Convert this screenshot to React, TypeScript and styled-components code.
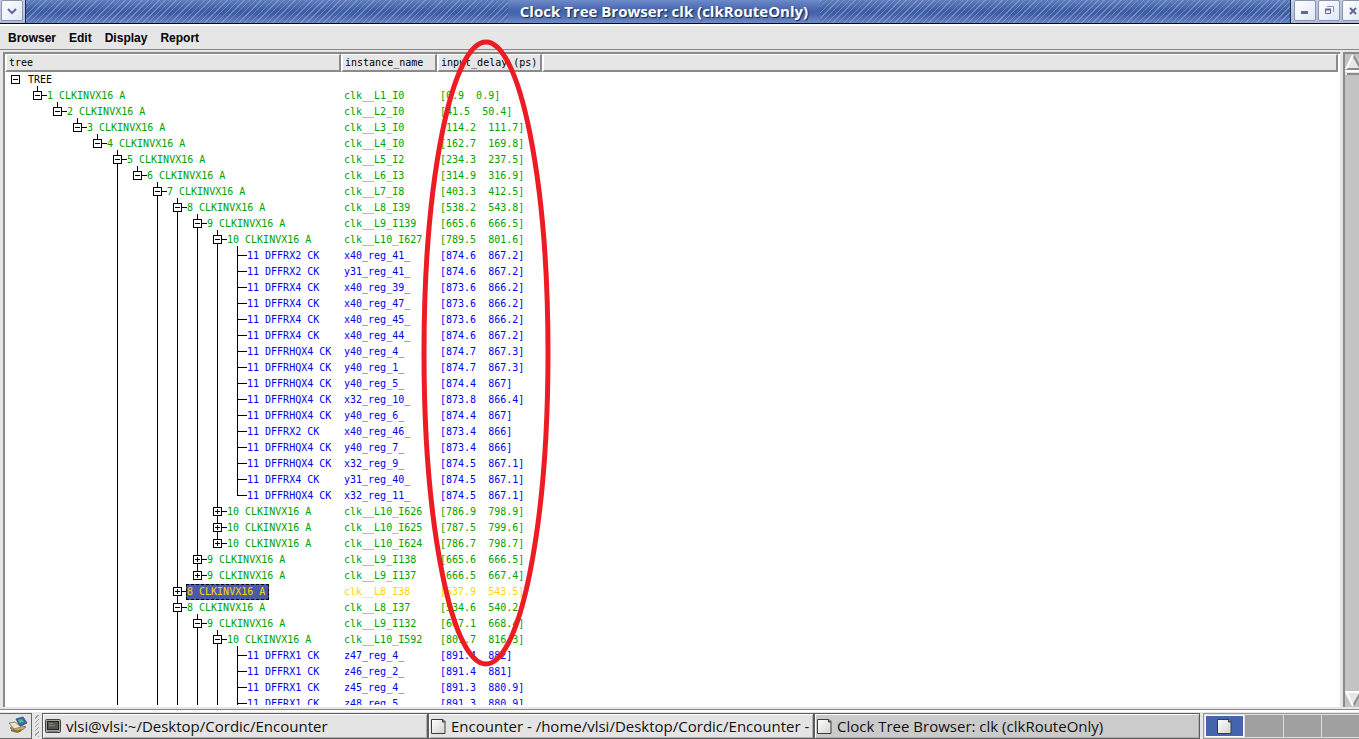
import React from "react";
import styled, { createGlobalStyle } from "styled-components";

const Global = createGlobalStyle`
  *, *::before, *::after { box-sizing: border-box; }
  body { margin: 0; background: #e6e6e6; }
`;

const Screen = styled.div`
  display: flex;
  flex-direction: column;
  height: 100vh;
  overflow: hidden;
  background: #e6e6e6;
  color: #000;
`;

const TitleBar = styled.header`
  display: flex;
  flex: none;
  height: 24px;
  border-bottom: 1px solid #0a0a14;
`;

const TitleStrip = styled.div`
  flex: 1;
  display: flex;
  align-items: center;
  justify-content: center;
  padding-left: 12px;
  border: solid #1c2c5c;
  border-width: 0 1px;
  background:
    linear-gradient(rgba(140, 165, 220, 0.45), rgba(60, 90, 165, 0) 45%, rgba(60, 90, 165, 0) 60%, rgba(140, 165, 220, 0.5)),
    repeating-linear-gradient(135deg, #3c5ca4 0 2px, #6f8bbc 2px 3px, #3c5ca4 3px 4px);
`;

const TitleText = styled.h1`
  margin: 0;
  padding: 0 12px;
  font: bold 15px/23px "Open Sans", sans-serif;
  color: #fff;
  white-space: nowrap;
  text-shadow: 1px 1px 1px #16264f;
  background: linear-gradient(#6d8bc8, #4564ac 45%, #4564ac 60%, #6f8cc9);
`;

const Controls = styled.div<{ $width: number; $inset: number }>`
  flex: none;
  display: flex;
  gap: 2px;
  padding: 0 ${(p) => p.$inset}px;
  background: linear-gradient(#c4cee2, #aebbd6);
  width: ${(p) => p.$width}px;
  overflow: hidden;
`;

const ControlButton = styled.button`
  flex: none;
  width: 22px;
  height: 21px;
  padding: 0;
  display: grid;
  place-items: center;
  border: 1px solid #8a94ac;
  border-radius: 2px;
  background: linear-gradient(135deg, #fff, #dfe6f6);
  svg { display: block; }
`;

const MenuBar = styled.nav`
  flex: none;
  display: flex;
  gap: 13px;
  height: 26px;
  padding: 0 8px;
  border-top: 2px solid #fff;
  border-bottom: 1px solid #8a8a8a;
`;

const MenuItem = styled.button`
  padding: 0;
  border: 0;
  background: none;
  color: #000;
  font: bold 12px/22px "Liberation Sans", Arial, sans-serif;
`;

const Workspace = styled.main`
  flex: 1;
  min-height: 0;
  display: flex;
  gap: 3px;
  padding: 2px 0 2px 3px;
`;

const TreePanel = styled.section`
  flex: 1;
  min-width: 0;
  overflow: hidden;
  padding: 0 2px 0 0;
  border: solid #8a8a8a;
  border-width: 2px 0 0 2px;
  background: #fff;
`;

const TreeViewport = styled.div`
  height: 100%;
  overflow: hidden;
  border-bottom: 2px solid #fff;
`;

const TreeTable = styled.table`
  width: 100%;
  table-layout: fixed;
  border-collapse: separate;
  border-spacing: 0;
  font: 10px/16px "DejaVu Sans Mono", monospace;
  white-space: pre;
`;

const HeadCell = styled.th`
  height: 18px;
  padding: 0 2px;
  border: solid;
  border-width: 1px 2px 2px 2px;
  border-color: #fff #8a8a8a #8a8a8a #fff;
  background: #e6e6e6;
  font-weight: normal;
  line-height: 15px;
  text-align: left;
`;

type Tone = "root" | "clock" | "leaf" | "picked";
const toneColor: Record<Tone, string> = {
  root: "#000",
  clock: "#00a000",
  leaf: "#0000f0",
  picked: "#ffd700",
};

const Row = styled.tr<{ $tone: Tone }>`
  height: 16px;
  color: ${(p) => toneColor[p.$tone]};
`;

const Cell = styled.td`
  height: 16px;
  padding: 0 0 0 3px;
  line-height: 16px;
`;

const TreeCell = styled(Cell)`
  padding: 0 0 0 2px;
`;

const Branch = styled.div`
  display: flex;
  height: 16px;
`;

const Guide = styled.span<{ $line: number; $joined?: boolean }>`
  flex: none;
  width: 20px;
  height: 18px;
  margin-top: -2px;
  padding: 5px 0 0 6px;
  background-image: linear-gradient(#000, #000), linear-gradient(#000, #000);
  background-repeat: no-repeat;
  background-position: 10px 0, 10px 9px;
  background-size: 1px ${(p) => p.$line}px, ${(p) => (p.$joined ? "10px 1px" : "0 0")};
`;

const RootGuide = styled.span`
  flex: none;
  width: 21px;
  padding: 3px 0 0 4px;
`;

const Toggle = styled.button<{ $open: boolean }>`
  display: block;
  width: 9px;
  height: 9px;
  padding: 0;
  border: 1px solid #000;
  background:
    linear-gradient(#000, #000) center / 5px 1px no-repeat,
    linear-gradient(#000, #000) center / ${(p) => (p.$open ? "0 0" : "1px 5px")} no-repeat,
    #fff;
`;

const Label = styled.span<{ $picked?: boolean }>`
  ${(p) =>
    p.$picked &&
    `background: #4a5aa8; outline: 1px dashed #000; outline-offset: -1px; margin-left: -1px; padding: 0 4px 0 1px;`}
`;

const Annotation = styled.svg`
  position: absolute;
  left: 419px;
  top: 38px;
  pointer-events: none;
`;

const ScrollBar = styled.div`
  flex: none;
  width: 16px;
  display: flex;
  flex-direction: column;
  justify-content: space-between;
  overflow: hidden;
  border: solid #8a8a8a;
  border-width: 2px 0 0 2px;
  background: #c3c3c3;
`;

const ScrollButton = styled.button`
  display: block;
  padding: 0;
  border: 0;
  background: none;
  svg { display: block; }
`;

const TaskBar = styled.footer`
  flex: none;
  display: flex;
  height: 30px;
  border-top: 1px solid #8a8a8a;
  padding-top: 3px;
  background: #e6e6e6;
  box-shadow: inset 0 2px #fff;
`;

const Launcher = styled.button`
  flex: none;
  width: 32px;
  padding: 0 0 0 5px;
  border: solid #666;
  border-width: 1px 1px 1px 0;
  background: #e2e2e2;
`;

const Grip = styled.div`
  flex: none;
  width: 10px;
  background: repeating-linear-gradient(135deg, #e6e6e6 0 2px, #a0a0a0 2px 3px) center / 4px 22px no-repeat;
`;

const Task = styled.button<{ $active?: boolean }>`
  flex: 1;
  min-width: 0;
  display: flex;
  align-items: center;
  gap: 5px;
  padding: 0 0 0 2px;
  border: 1px solid #5c5c5c;
  box-shadow: inset 1px 1px #fff, inset -1px -1px #b0b0b0;
  background: ${(p) => (p.$active ? "#cbcbcb" : "#e4e4e4")};
  color: #111;
  font: 15px/22px "Open Sans", sans-serif;
  white-space: nowrap;
  overflow: hidden;
  svg { flex: none; }
`;

const Pager = styled.div`
  flex: none;
  width: 156px;
  margin-left: 3px;
  display: flex;
  gap: 1px;
  padding: 1px 0 1px 1px;
  border: 1px solid #999;
  border-right: 0;
  background: #dedede;
`;

const Desk = styled.button<{ $current?: boolean }>`
  flex: 1;
  padding: 0;
  display: grid;
  place-items: center;
  border: ${(p) => (p.$current ? "1px solid #fff" : "0")};
  background: ${(p) => (p.$current ? "#4464ac" : "#a0a0a0")};
`;

const PageIcon = () => (
  <svg width="15" height="17" viewBox="0 0 15 17" aria-hidden="true">
    <defs>
      <linearGradient id="paper" x1="0" y1="0" x2="1" y2="1">
        <stop offset="0" stopColor="#fff" />
        <stop offset="1" stopColor="#d2d2cc" />
      </linearGradient>
    </defs>
    <path d="M.5 1.5h11.500l2 2v12H.5z" fill="url(#paper)" stroke="#3c3c3c" />
    <path d="M11.500 1.500v2.500h2.500" fill="#777" stroke="#3c3c3c" />
  </svg>
);

const TerminalIcon = () => (
  <svg width="16" height="16" viewBox="0 0 16 16" aria-hidden="true">
    <rect x=".5" y="1.5" width="15" height="13" rx="1" fill="#a4a49c" stroke="#444" />
    <rect x="2.5" y="3.5" width="11" height="8" fill="#535b50" stroke="#222" />
    <path d="M4 5.500h4M4 7.500h6" stroke="#7d8677" />
    <path d="M3 13.500h10" stroke="#777" />
  </svg>
);

const DesktopIcon = () => (
  <svg width="21" height="18" viewBox="0 0 21 18" aria-hidden="true">
    <path d="M2 12l7-4 9 3-7 5z" fill="#c9a866" stroke="#86704a" />
    <path d="M8 3l7-2 4 6-7 3z" fill="#2c6cc8" stroke="#3c5878" />
    <path d="M10 4l4-1 2 3-4 1z" fill="#58b878" />
    <path d="M1 7l6-1 6 5-7 2z" fill="#ece6cc" stroke="#8a8474" />
    <path d="M3 14l6 2 4-2" fill="none" stroke="#8a6c34" strokeWidth="2" />
  </svg>
);

interface Item {
  level: number;
  cell: string;
  name: string;
  delay: string;
  kind: "open" | "closed" | "leaf";
  picked?: boolean;
}

const buf = (level: number, name: string, delay: string, kind: "open" | "closed" = "open", picked = false): Item => ({
  level, cell: "CLKINVX16 A", name, delay, kind, picked,
});
const leaf = (cell: string, name: string, delay: string): Item => ({
  level: 11, cell: `${cell} CK`, name, delay, kind: "leaf",
});

const items: Item[] = [
  buf(1, "clk__L1_I0", "[0.9  0.9]"),
  buf(2, "clk__L2_I0", "[41.5  50.4]"),
  buf(3, "clk__L3_I0", "[114.2  111.7]"),
  buf(4, "clk__L4_I0", "[162.7  169.8]"),
  buf(5, "clk__L5_I2", "[234.3  237.5]"),
  buf(6, "clk__L6_I3", "[314.9  316.9]"),
  buf(7, "clk__L7_I8", "[403.3  412.5]"),
  buf(8, "clk__L8_I39", "[538.2  543.8]"),
  buf(9, "clk__L9_I139", "[665.6  666.5]"),
  buf(10, "clk__L10_I627", "[789.5  801.6]"),
  leaf("DFFRX2", "x40_reg_41_", "[874.6  867.2]"),
  leaf("DFFRX2", "y31_reg_41_", "[874.6  867.2]"),
  leaf("DFFRX4", "x40_reg_39_", "[873.6  866.2]"),
  leaf("DFFRX4", "x40_reg_47_", "[873.6  866.2]"),
  leaf("DFFRX4", "x40_reg_45_", "[873.6  866.2]"),
  leaf("DFFRX4", "x40_reg_44_", "[874.6  867.2]"),
  leaf("DFFRHQX4", "y40_reg_4_", "[874.7  867.3]"),
  leaf("DFFRHQX4", "y40_reg_1_", "[874.7  867.3]"),
  leaf("DFFRHQX4", "y40_reg_5_", "[874.4  867]"),
  leaf("DFFRHQX4", "x32_reg_10_", "[873.8  866.4]"),
  leaf("DFFRHQX4", "y40_reg_6_", "[874.4  867]"),
  leaf("DFFRX2", "x40_reg_46_", "[873.4  866]"),
  leaf("DFFRHQX4", "y40_reg_7_", "[873.4  866]"),
  leaf("DFFRHQX4", "x32_reg_9_", "[874.5  867.1]"),
  leaf("DFFRX4", "y31_reg_40_", "[874.5  867.1]"),
  leaf("DFFRHQX4", "x32_reg_11_", "[874.5  867.1]"),
  buf(10, "clk__L10_I626", "[786.9  798.9]", "closed"),
  buf(10, "clk__L10_I625", "[787.5  799.6]", "closed"),
  buf(10, "clk__L10_I624", "[786.7  798.7]", "closed"),
  buf(9, "clk__L9_I138", "[665.6  666.5]", "closed"),
  buf(9, "clk__L9_I137", "[666.5  667.4]", "closed"),
  buf(8, "clk__L8_I38", "[537.9  543.5]", "closed", true),
  buf(8, "clk__L8_I37", "[534.6  540.2]"),
  buf(9, "clk__L9_I132", "[667.1  668.4]"),
  buf(10, "clk__L10_I592", "[801.7  816.3]"),
  leaf("DFFRX1", "z47_reg_4_", "[891.4  882]"),
  leaf("DFFRX1", "z46_reg_2_", "[891.4  881]"),
  leaf("DFFRX1", "z45_reg_4_", "[891.3  880.9]"),
  leaf("DFFRX1", "z48_reg_5_", "[891.3  880.9]"),
];

// Levels whose siblings go on past the last loaded row.
const unfinished = new Set([5, 7, 8, 9, 10, 11]);

const continues = (index: number, level: number) => {
  const next = items.slice(index + 1).find((item) => item.level <= level);
  return next ? next.level === level : unfinished.has(level);
};

const guideLength = (index: number, level: number) => {
  if (continues(index, level)) return 18;
  return items[index].level === level ? 10 : 0;
};

const tone = (item: Item): Tone => (item.picked ? "picked" : item.kind === "leaf" ? "leaf" : "clock");

const TreeRow = ({ item, index }: { item: Item; index: number }) => (
  <Row $tone={tone(item)}>
    <TreeCell>
      <Branch>
        {Array.from({ length: item.level + 1 }, (_, level) => (
          <Guide key={level} $line={level ? guideLength(index, level) : 0} $joined={level === item.level}>
            {level === item.level && item.kind !== "leaf" && (
              <Toggle $open={item.kind === "open"} aria-label={`Toggle ${item.name}`} />
            )}
          </Guide>
        ))}
        <Label $picked={item.picked}>{`${item.level} ${item.cell}`}</Label>
      </Branch>
    </TreeCell>
    <Cell>{item.name}</Cell>
    <Cell>{item.delay}</Cell>
    <Cell />
  </Row>
);

export default function App() {
  return (
    <Screen>
      <Global />
      <TitleBar>
        <Controls $width={25} $inset={1}>
          <ControlButton aria-label="Window menu">
            <svg width="10" height="8" viewBox="0 0 10 8"><path d="M1 2l4 4 4-4" fill="none" stroke="#5c6a92" strokeWidth="2" /></svg>
          </ControlButton>
        </Controls>
        <TitleStrip>
          <TitleText>Clock Tree Browser: clk (clkRouteOnly)</TitleText>
        </TitleStrip>
        <Controls $width={68} $inset={3}>
          <ControlButton aria-label="Minimize">
            <svg width="8" height="8" viewBox="0 0 8 8"><path d="M0 5.500h7" stroke="#5c6a92" strokeWidth="3" /></svg>
          </ControlButton>
          <ControlButton aria-label="Restore">
            <svg width="9" height="9" viewBox="0 0 9 9"><path d="M2 .5h6.500V6" fill="none" stroke="#8a94b4" /><path d="M.5 3.500h5v4h-5z" fill="none" stroke="#5c6a92" /><path d="M0 3.500h6" stroke="#5c6a92" strokeWidth="2" /></svg>
          </ControlButton>
          <ControlButton aria-label="Close">
            <svg width="8" height="8" viewBox="0 0 8 8"><path d="M1 1l6 6M7 1L1 7" stroke="#5c6a92" strokeWidth="2" /></svg>
          </ControlButton>
        </Controls>
      </TitleBar>
      <MenuBar>
        {["Browser", "Edit", "Display", "Report"].map((name) => <MenuItem key={name}>{name}</MenuItem>)}
      </MenuBar>
      <Workspace>
        <TreePanel>
          <TreeViewport>
            <TreeTable>
              <colgroup>
                <col width="336" />
                <col width="96" />
                <col width="105" />
                <col />
              </colgroup>
              <thead>
                <tr>
                  <HeadCell>tree</HeadCell>
                  <HeadCell>instance_name</HeadCell>
                  <HeadCell>input_delay (ps)</HeadCell>
                  <HeadCell />
                </tr>
              </thead>
              <tbody>
                <Row $tone="root">
                  <TreeCell>
                    <Branch>
                      <RootGuide><Toggle $open aria-label="Toggle TREE" /></RootGuide>
                      <Label>TREE</Label>
                    </Branch>
                  </TreeCell>
                </Row>
                {items.map((item, index) => <TreeRow key={index} item={item} index={index} />)}
              </tbody>
            </TreeTable>
          </TreeViewport>
        </TreePanel>
        <ScrollBar>
          <ScrollButton aria-label="Scroll up">
            <svg width="17" height="22" viewBox="0 0 17 22">
              <path d="M1 15L8 1l8 14z" fill="#e6e6e6" />
              <path d="M8 1l8 14H1" fill="none" stroke="#8a8a8a" strokeWidth="2" />
              <path d="M1 15L8 1" stroke="#fff" strokeWidth="2" />
              <path d="M0 16h17v5H0z" fill="#e6e6e6" />
              <path d="M0 17h17" stroke="#fff" strokeWidth="2" />
              <path d="M2 20h15" stroke="#8a8a8a" strokeWidth="2" />
            </svg>
          </ScrollButton>
          <ScrollButton aria-label="Scroll down">
            <svg width="17" height="16" viewBox="0 0 17 16">
              <path d="M1 1h15L8 15z" fill="#e6e6e6" />
              <path d="M16 1L8 15" stroke="#8a8a8a" strokeWidth="2" />
              <path d="M16 1H1l7 14" fill="none" stroke="#fff" strokeWidth="2" />
            </svg>
          </ScrollButton>
        </ScrollBar>
      </Workspace>
      <TaskBar>
        <Launcher aria-label="Show desktop"><DesktopIcon /></Launcher>
        <Grip />
        <Task><TerminalIcon />vlsi@vlsi:~/Desktop/Cordic/Encounter</Task>
        <Task><PageIcon />Encounter - /home/vlsi/Desktop/Cordic/Encounter -</Task>
        <Task $active><PageIcon />Clock Tree Browser: clk (clkRouteOnly)</Task>
        <Pager>
          <Desk $current aria-label="Workspace 1"><PageIcon /></Desk>
          <Desk aria-label="Workspace 2" />
          <Desk aria-label="Workspace 3" />
          <Desk aria-label="Workspace 4" />
        </Pager>
      </TaskBar>
      <Annotation width="134" height="630" viewBox="0 0 134 630" aria-hidden="true">
        <ellipse cx="67" cy="315" rx="62" ry="311" fill="none" stroke="#ed1c24" strokeWidth="5" />
      </Annotation>
    </Screen>
  );
}
